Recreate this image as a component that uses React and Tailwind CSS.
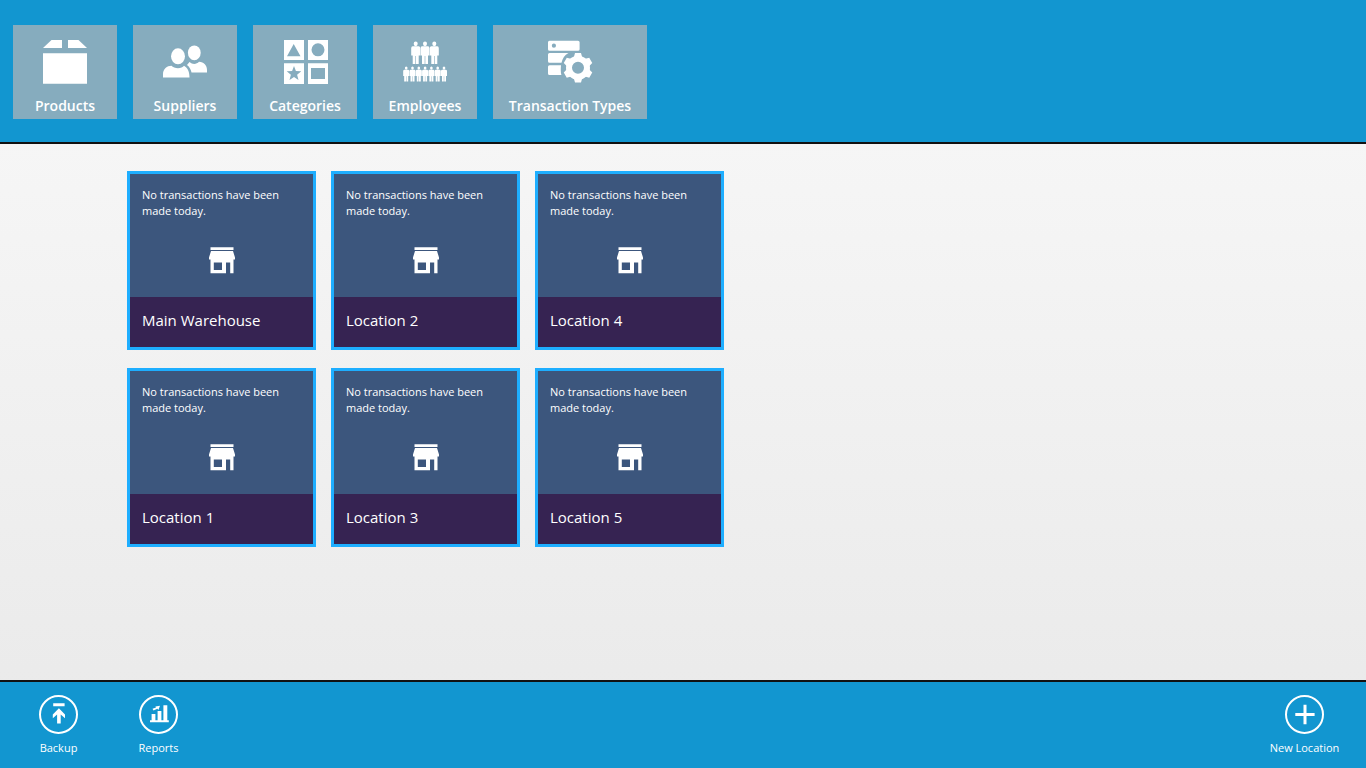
import React from 'react';

const CATALOGS = [
  { label: 'Products', Icon: BoxIcon },
  { label: 'Suppliers', Icon: PeopleIcon },
  { label: 'Categories', Icon: ShapesIcon },
  { label: 'Employees', Icon: CrowdIcon },
  { label: 'Transaction Types', Icon: ServerGearIcon, wide: true },
];

const LOCATIONS = ['Main Warehouse', 'Location 1', 'Location 2', 'Location 3', 'Location 4', 'Location 5'];

function TileSvg({ children }) {
  return (
    <svg className="h-11 w-11 overflow-visible" viewBox="0 0 44 44" fill="white" aria-hidden="true">
      {children}
    </svg>
  );
}

function BoxIcon() {
  return (
    <TileSvg>
      <path d="M0 8L8.5 0H19V8ZM25 8V0H35.5L44 8ZM0 13.3H44V43.8H0Z" />
    </TileSvg>
  );
}

function PeopleIcon() {
  return (
    <TileSvg>
      <ellipse cx="15" cy="16.3" rx="7" ry="8" />
      <ellipse cx="31.3" cy="12.8" rx="6.4" ry="7.4" />
      <path d="M0 37.4V34C0 29 4 25.7 8.5 25.7C11 29 19 29 21 25.7C25 28 26.5 32 26.5 37.4Z" />
      <path d="M24 25L26.5 22C29.5 24.7 33.5 24.5 36 21.8C41 22 44 25.5 44 30V32.6H28.5C28 29.5 26.5 27 24 25Z" />
    </TileSvg>
  );
}

function ShapesIcon() {
  return (
    <TileSvg>
      <path
        fillRule="evenodd"
        d="M1 0H21V20H1ZM10.7 4L4 16.2H17.5ZM25 0H45V20H25ZM28.5 9.8A6.5 6.5 0 1 0 41.5 9.8A6.5 6.5 0 1 0 28.5 9.8ZM1 23.3H21V44H1ZM11 26L12.9 31.1L18.3 31.3L14.1 34.7L15.5 39.9L11 36.9L6.5 39.9L7.9 34.7L3.7 31.3L9.1 31.1ZM25 23.3H45V44H25ZM28 28V39H42V28Z"
      />
    </TileSvg>
  );
}

function Person({ x, y, scale }) {
  return (
    <g transform={`translate(${x} ${y}) scale(${scale})`}>
      <ellipse cx="0" cy="2.2" rx="2" ry="2.4" />
      <path d="M-3 4.6H3Q4.5 4.8 4.5 6.6V14H3V22.4H.3V14.5H-.3V22.4H-3V14H-4.5V6.6Q-4.5 4.8 -3 4.6Z" />
    </g>
  );
}

function CrowdIcon() {
  return (
    <TileSvg>
      {[12.7, 22, 31.3].map((x) => (
        <Person key={x} x={x} y={1.6} scale={1} />
      ))}
      {[3.2, 9.5, 15.8, 22.1, 28.4, 34.7, 41].map((x) => (
        <Person key={x} x={x} y={26.6} scale={0.67} />
      ))}
    </TileSvg>
  );
}

function ServerGearIcon() {
  return (
    <TileSvg>
      <path
        fillRule="evenodd"
        d="M1.5 .7H30Q31.6 .7 31.6 2.2V9.2Q31.6 10.7 30 10.7H1.5Q0 10.7 0 9.2V2.2Q0 .7 1.5 .7ZM3.8 5.7A2.1 2.1 0 1 0 8 5.7A2.1 2.1 0 1 0 3.8 5.7Z"
      />
      <path d="M1.5 13H20.5C16.5 15 14.5 18.5 13.5 22.7H1.5Q0 22.7 0 21.2V14.5Q0 13 1.5 13ZM1.5 25.2H13C12.7 28.5 12.6 32 13.4 35H1.5Q0 35 0 33.5V26.7Q0 25.2 1.5 25.2Z" />
      <circle cx="30" cy="27.7" r="9" fill="none" stroke="white" strokeWidth="6" />
      {[0, 60, 120, 180, 240, 300].map((angle) => (
        <path key={angle} d="M25.6 18L27 13H33L34.4 18Z" transform={`rotate(${angle} 30 27.7)`} />
      ))}
    </TileSvg>
  );
}

function StoreIcon() {
  return (
    <svg className="h-7 w-7" viewBox="0 0 28 28" fill="white" aria-hidden="true">
      <path
        fillRule="evenodd"
        d="M2.5 .2H25.5V3H2.5ZM3 4H25L27 10.5V12.5H25.5V26.2H22.2V15.5H18V26.2H2.5V12.5H1V10.5ZM5.8 15.5V23H14V15.5Z"
      />
    </svg>
  );
}

function CatalogTile({ label, Icon, wide }) {
  return (
    <button
      type="button"
      className={`flex h-[94px] flex-col items-center bg-[#86acbe] pt-[15px] text-sm leading-5 font-semibold text-white ${wide ? 'w-[154px]' : 'w-[104px]'}`}
    >
      <Icon />
      <span className="mt-3">{label}</span>
    </button>
  );
}

function LocationCard({ name }) {
  return (
    <button type="button" className="border-3 border-[#1eaeff] text-left text-white">
      <span className="flex h-[123px] flex-col items-center bg-[#3c567d] px-3 pt-[13px]">
        <span className="w-full pr-4 text-[11px] leading-4">No transactions have been made today.</span>
        <span className="mt-7">
          <StoreIcon />
        </span>
      </span>
      <span className="block bg-[#362352] px-3 pt-[11px] pb-[15px] text-[15px] leading-6">{name}</span>
    </button>
  );
}

function AppBarButton({ label, children }) {
  return (
    <button type="button" className="flex w-[99px] flex-col items-center text-[11px] leading-4 text-white">
      <svg className="h-[39px] w-[39px]" viewBox="0 0 39 39" fill="white" aria-hidden="true">
        <circle cx="19.5" cy="19.5" r="18.5" fill="none" stroke="white" strokeWidth="2" />
        {children}
      </svg>
      <span className="mt-1.5 whitespace-nowrap">{label}</span>
    </button>
  );
}

export default function App() {
  return (
    <div className="flex min-h-screen flex-col bg-linear-to-b from-[#f9f9f9] to-[#e9e9e9] font-['Open_Sans',sans-serif]">
      <header className="border-b-2 border-[#111] bg-[#1296d0] px-[13px] pt-[25px] pb-[23px]">
        <nav className="flex flex-wrap gap-4">
          {CATALOGS.map((c) => (
            <CatalogTile key={c.label} {...c} />
          ))}
        </nav>
      </header>

      <main className="flex-1 px-[127px] py-[27px]">
        <div className="grid grid-flow-col auto-cols-[189px] grid-rows-[auto_auto] gap-x-[15px] gap-y-[18px]">
          {LOCATIONS.map((name) => (
            <LocationCard key={name} name={name} />
          ))}
        </div>
      </main>

      <footer className="flex items-start gap-px border-t-2 border-[#111] bg-[#1296d0] pt-[13px] pr-3 pb-3 pl-[9px]">
        <AppBarButton label="Backup">
          <path d="M14.2 8.3H25.6V11.3H14.2ZM19.9 13.3L26 19.6V23.2L21.7 19.4V28.6H18.1V19.4L13.8 23.2V19.6Z" />
        </AppBarButton>
        <AppBarButton label="Reports">
          <path d="M11 25.2H29.8V27.3H11ZM12.6 19H16.4V25.4H12.6ZM18.6 16H22.4V25.4H18.6ZM24.4 10.3H28.3V25.4H24.4Z" />
          <path d="M13.5 13.8L17 12.6L16.4 11.4L21 10.8L19.4 15L18.4 13.8L14.5 15.4Z" />
        </AppBarButton>
        <div className="ml-auto">
          <AppBarButton label="New Location">
            <path d="M18.5 9.8H21.5V18H29.6V21H21.5V29.2H18.5V21H10.3V18H18.5Z" />
          </AppBarButton>
        </div>
      </footer>
    </div>
  );
}
